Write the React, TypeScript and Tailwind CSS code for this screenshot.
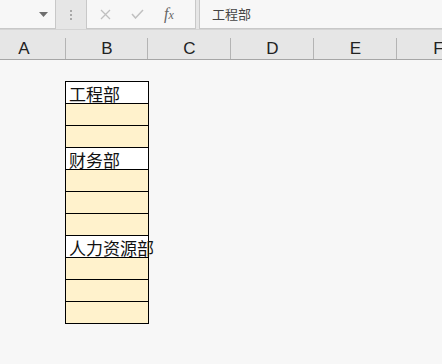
import React from "react";

const cjk = { fontFamily: '"Noto Sans CJK SC", "Microsoft YaHei", sans-serif' };

type Row = { text?: string; fill: boolean };

const rows: Row[] = [
  { text: "工程部", fill: false },
  { fill: true },
  { fill: true },
  { text: "财务部", fill: false },
  { fill: true },
  { fill: true },
  { fill: true },
  { text: "人力资源部", fill: false },
  { fill: true },
  { fill: true },
  { fill: true },
];

const cols = [
  { l: "A", w: 84 },
  { l: "B", w: 82 },
  { l: "C", w: 83 },
  { l: "D", w: 83 },
  { l: "E", w: 83 },
  { l: "F", w: 83 },
];

export default function App() {
  return (
    <div className="w-[442px] h-[364px] overflow-hidden bg-[#f7f7f7] relative" style={{ fontFamily: '"Liberation Sans", Arial, sans-serif' }}>
      {/* toolbar */}
      <div className="h-[30px] bg-[#e6e6e6] flex items-start border-b border-[#d4d4d4]">
        <div className="w-[56px] shrink-0 h-[29px] bg-[#f7f7f7] border-r border-b border-[#c8c8c8] flex items-center justify-end pr-[7px]">
          <svg width="9" height="5" viewBox="0 0 9 5"><path d="M0 0H9L4.5 5Z" fill="#6e6e6e" /></svg>
        </div>
        <div className="w-[30px] shrink-0 h-[29px] flex flex-col items-center justify-center gap-[2px]">
          <div className="w-[2px] h-[2px] bg-[#a8a8a8]" />
          <div className="w-[2px] h-[2px] bg-[#a8a8a8]" />
          <div className="w-[2px] h-[2px] bg-[#a8a8a8]" />
        </div>
        <div className="w-[110px] shrink-0 h-[29px] bg-[#f7f7f7] border-l border-r border-b border-[#c8c8c8] flex items-center">
          <svg className="ml-[13px]" width="11" height="11" viewBox="0 0 11 11"><path d="M1 1L10 10M10 1L1 10" stroke="#c0c0c0" strokeWidth="1.3" /></svg>
          <svg className="ml-[20px]" width="13" height="10" viewBox="0 0 13 10"><path d="M1 5L4.5 9L12 1" stroke="#c0c0c0" strokeWidth="1.5" fill="none" /></svg>
          <span className="ml-[20px] text-[16px] italic text-[#666] leading-none" style={{ fontFamily: '"Liberation Serif", serif' }}>f<span className="text-[12px]">x</span></span>
        </div>
        <div className="ml-[3px] flex-1 h-[29px] bg-[#f7f7f7] border-l border-b border-[#c8c8c8] flex items-center pl-[12px] text-[13px] text-[#444]" style={cjk}>
          工程部
        </div>
      </div>
      {/* column headers */}
      <div className="h-[30px] bg-[#e6e6e6] flex border-b border-[#a6a6a6]">
        <div className="flex -ml-[18px]">
          {cols.map((c) => (
            <div key={c.l} className="relative shrink-0 flex items-end justify-center text-[17px] text-[#222]" style={{ width: c.w }}>
              <span className="leading-[20px]">{c.l}</span>
              <div className="absolute right-0 bottom-0 w-px h-[21px] bg-[#b4b4b4]" />
            </div>
          ))}
        </div>
      </div>
      {/* grid */}
      <div className="pt-[21px] pl-[65px]">
        <div className="w-[84px] border-t border-black">
          {rows.map((r, i) => (
            <div
              key={i}
              className={`h-[22px] border-l border-r border-b border-black text-[17px] leading-[24px] pl-[3px] whitespace-nowrap overflow-visible text-[#111] ${r.fill ? "bg-[#fff2cc]" : "bg-white"}`}
              style={cjk}
            >
              {r.text}
            </div>
          ))}
        </div>
      </div>
    </div>
  );
}
